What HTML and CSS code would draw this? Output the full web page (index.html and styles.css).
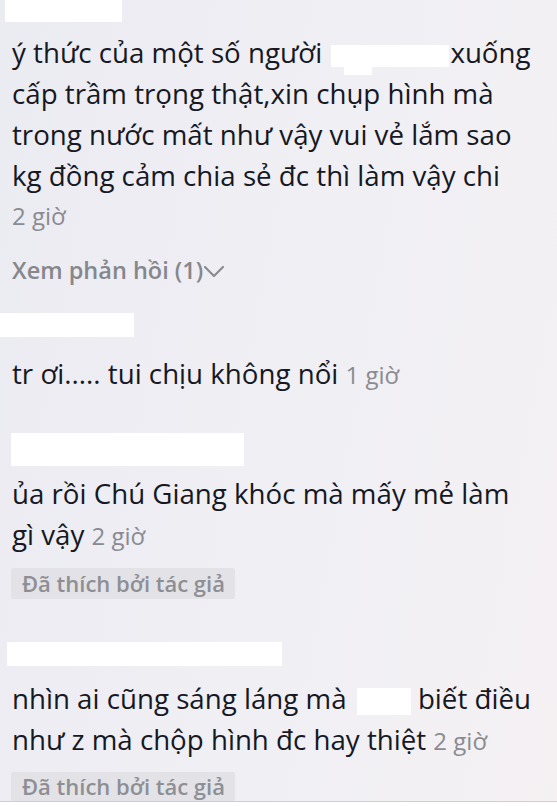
FILE: index.html
```html
<!DOCTYPE html>
<html lang="vi">
<head>
    <meta charset="UTF-8">
    <meta name="viewport" content="width=device-width, initial-scale=1.0">
    <title>Bình luận</title>
    <link rel="stylesheet" href="styles.css">
</head>
<body>
    <div class="comments">

        <!-- Bình luận 1 -->
        <div class="comment comment-first">
            <div class="name name-1">
                <span class="mask"></span>
            </div>
            <p class="text">ý thức của một số người <span class="blur blur-wide"></span>xuống cấp trầm trọng thật,xin chụp hình mà trong nước mất như vậy vui vẻ lắm sao kg đồng cảm chia sẻ đc thì làm vậy chi</p>
            <div class="time-line">2 giờ</div>
            <div class="replies">
                Xem phản hồi (1)
                <svg class="chevron" width="22" height="13" viewBox="0 0 22 13">
                    <path d="M2 2 L11 11 L20 2" fill="none" stroke="#8a8b90" stroke-width="2.2" stroke-linecap="round" stroke-linejoin="round"/>
                </svg>
            </div>
        </div>

        <!-- Bình luận 2 -->
        <div class="comment comment-2">
            <div class="name name-2">
                <span class="mask"></span>
            </div>
            <p class="text">tr ơi..... tui chịu không nổi <span class="time">1 giờ</span></p>
        </div>

        <!-- Bình luận 3 -->
        <div class="comment comment-3">
            <div class="name name-3">
                <span class="mask"></span>
            </div>
            <p class="text">ủa rồi Chú Giang khóc mà mấy mẻ làm gì vậy <span class="time">2 giờ</span></p>
            <div class="badge">Đã thích bởi tác giả</div>
        </div>

        <!-- Bình luận 4 -->
        <div class="comment comment-4">
            <div class="name name-4">
                <span class="mask"></span>
            </div>
            <p class="text">nhìn ai cũng sáng láng mà <span class="blur blur-small"></span> biết điều như z mà chộp hình đc hay thiệt <span class="time">2 giờ</span></p>
            <div class="badge badge-last">Đã thích bởi tác giả</div>
        </div>

    </div>
    <div class="bottom-bar"></div>
</body>
</html>
```

FILE: styles.css
```css
/* Corpo */
body {
    margin: 0;
    padding: 0;
    font-family: "Open Sans", "Noto Sans", sans-serif;
    background: linear-gradient(100deg, #ebebf2 0%, #efeff4 50%, #f5f1f3 100%);
    color: #161823;
    overflow: hidden;
    height: 807px;
    display: flex;
    flex-direction: column;
}

.comments {
    padding-left: 12px;
    height: 802px;
    overflow: hidden;
    border-bottom: 1px solid #cfcfd3;
    box-sizing: border-box;
}

.bottom-bar {
    flex: 1;
    background-color: #fff;
}

/* Nome do usuário (escondido) */
.name {
    position: relative;
}

.name .mask {
    position: absolute;
    top: 0;
    background-color: #fff;
}

.name-1 { height: 32px; }
.name-1 .mask { left: -7px; width: 117px; height: 22px; }

.name-2 { height: 40px; }
.name-2 .mask { left: -12px; width: 134px; height: 24px; }

.name-3 { height: 40px; }
.name-3 .mask { left: -1px; width: 233px; height: 33px; }

.name-4 { height: 36px; }
.name-4 .mask { left: -5px; width: 275px; height: 24px; }

/* Texto do comentário */
.text {
    margin: 0;
    font-size: 27.7px;
    line-height: 41px;
    padding-right: 21px;
}

.blur {
    position: relative;
    display: inline-block;
    background-color: #fff;
    vertical-align: middle;
}

.blur-wide {
    width: 118px;
    height: 22px;
    margin-left: 2px;
    margin-right: 1px;
}

/* pedaço que desce do retângulo branco */
.blur-wide::after {
    content: "";
    position: absolute;
    left: 13px;
    top: 100%;
    width: 28px;
    height: 8px;
    background-color: #fff;
}

.blur-small {
    width: 54px;
    height: 27px;
    margin-left: 3px;
}

.time,
.time-line {
    color: #8a8b91;
    font-size: 24px;
    line-height: 1;
}

.time-line {
    line-height: 39px;
}

.replies {
    margin-top: 22px;
    height: 26px;
    line-height: 26px;
    color: #86878c;
    font-size: 23.5px;
    font-weight: 600;
    display: flex;
    align-items: center;
    gap: 0;
}

.chevron {
    margin-top: 2px;
}

/* Espaço entre comentários */
.comment-2 { margin-top: 30px; }
.comment-3 { margin-top: 39px; }
.comment-4 { margin-top: 43px; }

/* Curtido pelo autor */
.badge {
    display: block;
    width: fit-content;
    margin-top: 13px;
    margin-left: -1px;
    height: 31px;
    line-height: 31px;
    padding: 0 10px 0 11px;
    background-color: #e2e2e7;
    color: #8e8f94;
    font-size: 22px;
    font-weight: 600;
    border-radius: 2px;
}

.badge-last {
    margin-top: 12px;
    height: 29px;
    line-height: 29px;
}
```
